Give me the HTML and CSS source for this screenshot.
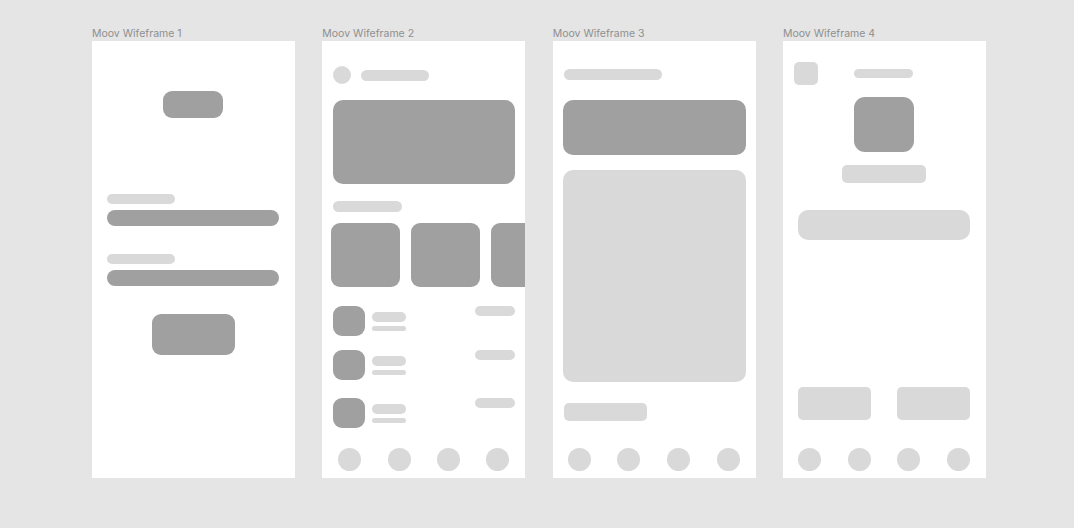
FILE: index.html
```html
<!DOCTYPE html>
<html lang="en">
<head>
  <meta charset="UTF-8">
  <title>Moov Wireframes</title>
  <link rel="stylesheet" href="styles.css">
</head>
<body>

  <div class="board">

    <!-- 1: login -->
    <section class="artboard">
      <div class="artboard-name">Moov Wifeframe 1</div>
      <div class="screen login">
        <div class="dark login-logo"></div>
        <div class="light field-label first"></div>
        <div class="dark field"></div>
        <div class="light field-label"></div>
        <div class="dark field"></div>
        <div class="dark login-btn"></div>
      </div>
    </section>

    <!-- 2: home -->
    <section class="artboard">
      <div class="artboard-name">Moov Wifeframe 2</div>
      <div class="screen home">
        <div class="home-head">
          <div class="light avatar"></div>
          <div class="light head-title"></div>
        </div>
        <div class="dark banner"></div>
        <div class="light section-title"></div>
        <div class="cards">
          <div class="dark card"></div>
          <div class="dark card"></div>
          <div class="dark card"></div>
        </div>
        <div class="list">
          <div class="list-row">
            <div class="dark thumb"></div>
            <div class="row-text">
              <div class="light row-title"></div>
              <div class="light row-sub"></div>
            </div>
            <div class="light row-meta"></div>
          </div>
          <div class="list-row">
            <div class="dark thumb"></div>
            <div class="row-text">
              <div class="light row-title"></div>
              <div class="light row-sub"></div>
            </div>
            <div class="light row-meta"></div>
          </div>
          <div class="list-row last">
            <div class="dark thumb"></div>
            <div class="row-text">
              <div class="light row-title"></div>
              <div class="light row-sub"></div>
            </div>
            <div class="light row-meta"></div>
          </div>
        </div>
        <nav class="tabbar">
          <span class="light tab"></span>
          <span class="light tab"></span>
          <span class="light tab"></span>
          <span class="light tab"></span>
        </nav>
      </div>
    </section>

    <!-- 3: detail -->
    <section class="artboard">
      <div class="artboard-name">Moov Wifeframe 3</div>
      <div class="screen detail">
        <div class="light detail-title"></div>
        <div class="dark detail-hero"></div>
        <div class="light detail-body"></div>
        <div class="light detail-tag"></div>
        <nav class="tabbar">
          <span class="light tab"></span>
          <span class="light tab"></span>
          <span class="light tab"></span>
          <span class="light tab"></span>
        </nav>
      </div>
    </section>

    <!-- 4: profile -->
    <section class="artboard">
      <div class="artboard-name">Moov Wifeframe 4</div>
      <div class="screen profile">
        <div class="profile-head">
          <div class="light back-btn"></div>
          <div class="light head-title small"></div>
          <div></div>
        </div>
        <div class="dark profile-pic"></div>
        <div class="light profile-name"></div>
        <div class="light profile-info"></div>
        <div class="profile-actions">
          <div class="light action"></div>
          <div class="light action"></div>
        </div>
        <nav class="tabbar">
          <span class="light tab"></span>
          <span class="light tab"></span>
          <span class="light tab"></span>
          <span class="light tab"></span>
        </nav>
      </div>
    </section>

  </div>

</body>
</html>
```

FILE: styles.css
```css
    body {
      margin: 0;
      background: #e5e5e5;
      font-family: Inter, "Liberation Sans", sans-serif;
    }
    .board {
      display: grid;
      grid-template-columns: repeat(4, 203px);
      column-gap: 27.33px;
      padding: 27px 0 0 92px;
    }
    .artboard-name {
      font-size: 10.5px;
      line-height: 13px;
      color: #8f8f8f;
      margin-bottom: 1px;
    }
    .screen {
      height: 437px;
      background: #fff;
      display: flex;
      flex-direction: column;
      overflow: hidden;
      box-sizing: border-box;
    }

    /* placeholder fills */
    .dark {
      background: #a0a0a0;
    }
    .light {
      background: #d9d9d9;
    }

    /* 1 - login */
    .login {
      padding: 0 16px 0 15px;
    }
    .login-logo {
      width: 60px;
      height: 27px;
      border-radius: 9px;
      margin: 50px auto 0;
    }
    .field-label {
      width: 68px;
      height: 10px;
      border-radius: 5px;
      margin-top: 28px;
    }
    .field-label.first {
      margin-top: 76px;
    }
    .field {
      height: 16px;
      border-radius: 8px;
      margin-top: 6px;
    }
    .login-btn {
      width: 83px;
      height: 41px;
      border-radius: 9px;
      margin: 28px auto 0;
    }

    /* 2 - home */
    .home {
      padding: 0 10px 7px 11px;
    }
    .home-head {
      display: flex;
      align-items: center;
      gap: 10px;
      margin-top: 25px;
    }
    .avatar {
      width: 18px;
      height: 18px;
      border-radius: 50%;
    }
    .head-title {
      width: 68px;
      height: 11px;
      border-radius: 6px;
    }
    .banner {
      height: 84px;
      border-radius: 10px;
      margin-top: 16px;
    }
    .section-title {
      width: 69px;
      height: 11px;
      border-radius: 6px;
      margin-top: 17px;
    }
    .cards {
      display: flex;
      gap: 11px;
      margin: 11px -10px 0 -2px;
    }
    .card {
      flex: none;
      width: 69px;
      height: 64px;
      border-radius: 9px;
    }
    .list {
      display: flex;
      flex-direction: column;
      gap: 14px;
      margin-top: 19px;
    }
    .list-row {
      display: flex;
      align-items: flex-start;
      gap: 7px;
    }
    .list-row.last {
      margin-top: 4px;
    }
    .thumb {
      width: 32px;
      height: 30px;
      border-radius: 9px;
    }
    .row-text {
      display: flex;
      flex-direction: column;
      gap: 4px;
      padding-top: 6px;
    }
    .row-title {
      width: 34px;
      height: 10px;
      border-radius: 5px;
    }
    .row-sub {
      width: 34px;
      height: 5px;
      border-radius: 3px;
    }
    .row-meta {
      width: 40px;
      height: 10px;
      border-radius: 5px;
      margin-left: auto;
    }

    /* bottom tab bar, shared */
    .tabbar {
      display: flex;
      justify-content: space-between;
      margin: auto 6px 0 5px;
    }
    .tab {
      width: 23px;
      height: 23px;
      border-radius: 50%;
    }

    /* 3 - detail */
    .detail {
      padding: 0 10px 7px 10px;
    }
    .detail-title {
      width: 98px;
      height: 11px;
      border-radius: 6px;
      margin: 28px 0 0 1px;
    }
    .detail-hero {
      height: 55px;
      border-radius: 10px;
      margin-top: 20px;
    }
    .detail-body {
      height: 212px;
      border-radius: 10px;
      margin-top: 15px;
    }
    .detail-tag {
      width: 83px;
      height: 18px;
      border-radius: 5px;
      margin: 21px 0 0 1px;
    }

    /* 4 - profile */
    .profile {
      padding: 0 16px 7px 15px;
    }
    .profile-head {
      display: grid;
      grid-template-columns: 1fr auto 1fr;
      align-items: start;
      margin-top: 21px;
    }
    .back-btn {
      width: 24px;
      height: 23px;
      border-radius: 5px;
      margin-left: -4px;
    }
    .head-title.small {
      width: 59px;
      height: 9px;
      border-radius: 5px;
      margin-top: 7px;
    }
    .profile-pic {
      width: 60px;
      height: 55px;
      border-radius: 11px;
      margin: 12px auto 0;
    }
    .profile-name {
      width: 84px;
      height: 18px;
      border-radius: 5px;
      margin: 13px auto 0;
    }
    .profile-info {
      height: 30px;
      border-radius: 10px;
      margin-top: 27px;
    }
    .profile-actions {
      display: flex;
      justify-content: space-between;
      margin-top: auto;
    }
    .action {
      width: 73px;
      height: 33px;
      border-radius: 5px;
    }
    .profile .tabbar {
      margin: 28px 0 0;
    }
```
